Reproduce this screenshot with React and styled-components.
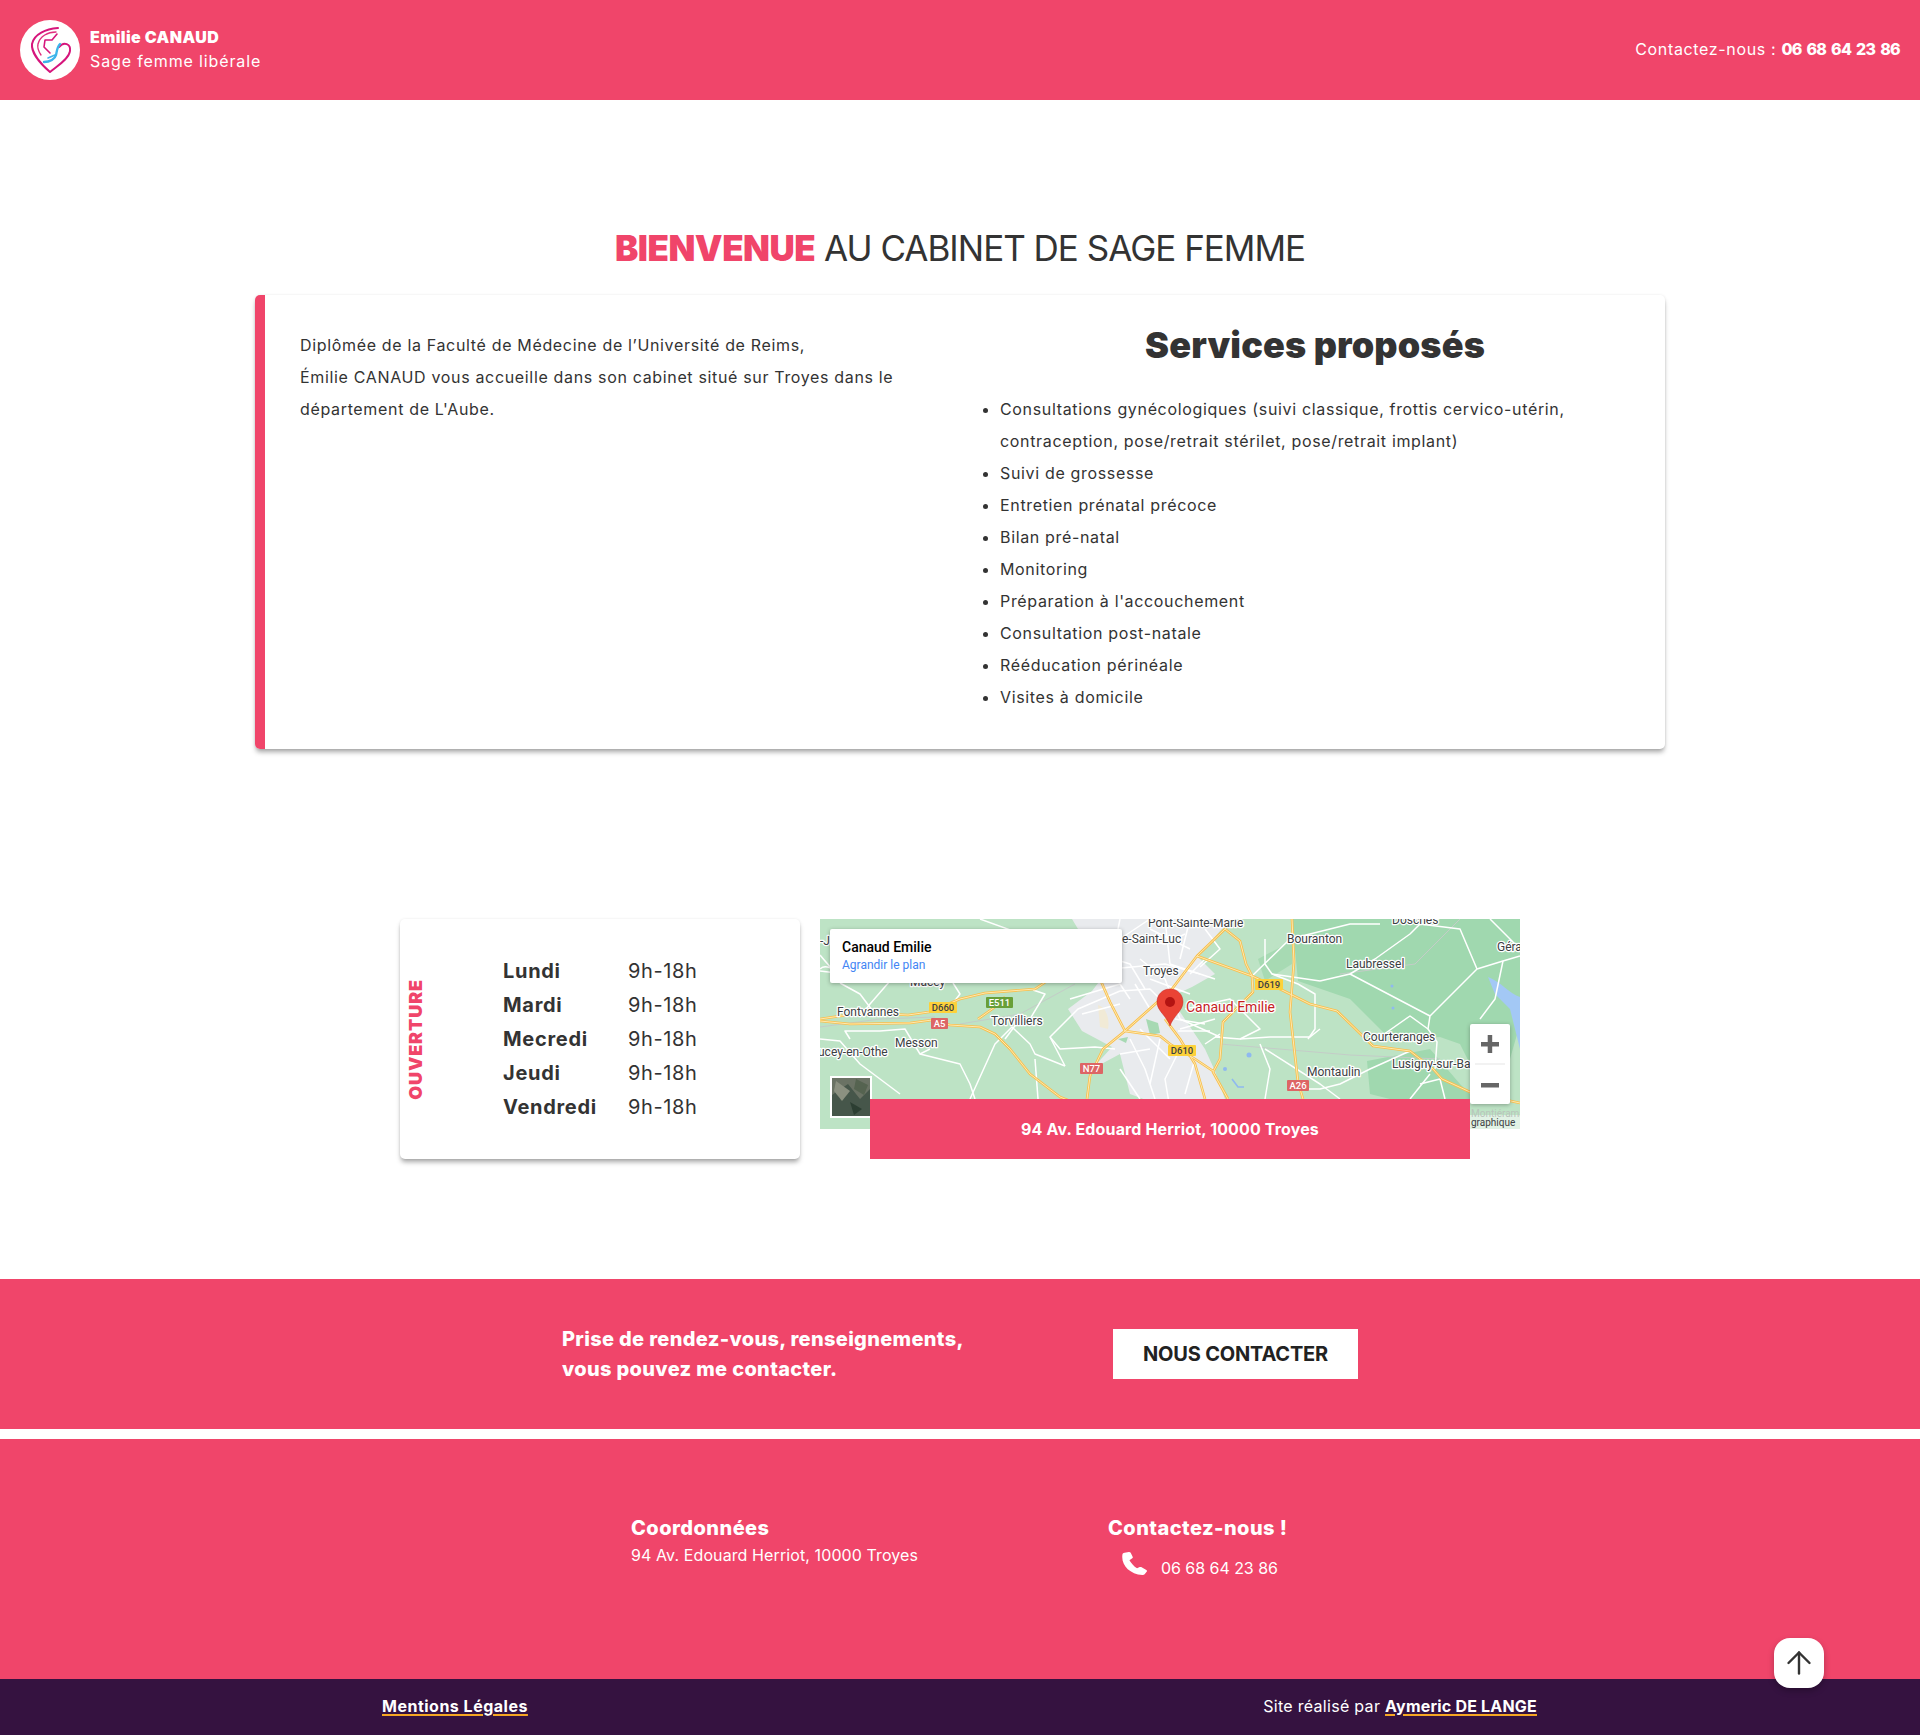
import React from 'react'
import styled, { createGlobalStyle } from 'styled-components'
import { ArrowUp } from 'lucide-react'

const pink = '#f0456a'
const dark = '#333333'
const sans = '"Inter", "Liberation Sans", sans-serif'
const cardShadow = '0 4px 5px -1px rgba(0, 0, 0, 0.35), 0 0 3px rgba(0, 0, 0, 0.08)'

const Global = createGlobalStyle`
  html, body { margin: 0; padding: 0; background: #fff; }
  body { font-family: ${sans}; color: ${dark}; width: 1920px; height: 1735px; overflow: hidden; }
  * { box-sizing: border-box; }
`

const Header = styled.header`
  height: 100px;
  background: ${pink};
  color: #fff;
  display: flex;
  align-items: center;
  justify-content: space-between;
  padding: 0 20px;
  font-size: 16px;
`
const Brand = styled.div`
  display: flex;
  align-items: center;
  gap: 10px;
`
const LogoDisc = styled.div`
  width: 60px;
  height: 60px;
  border-radius: 50%;
  background: #fff;
`
const BrandText = styled.div`
  line-height: 24px;
  padding-bottom: 3px;
  strong { display: block; font-weight: 900; letter-spacing: 0.4px; }
  span { letter-spacing: 0.87px; }
`
const HeadContact = styled.div`
  letter-spacing: 0.65px;
  padding-bottom: 2px;
  strong { font-weight: 800; letter-spacing: -0.7px; word-spacing: 2px; }
`

const Welcome = styled.section`
  padding-top: 126px;
`
const Title = styled.h1`
  margin: 0 0 20px;
  height: 49px;
  line-height: 44px;
  text-align: center;
  font-size: 35px;
  font-weight: 400;
  letter-spacing: -1px;
  b { color: ${pink}; font-weight: 900; letter-spacing: -0.5px; }
`
const Card = styled.div`
  width: 1410px;
  margin: 0 auto;
  display: flex;
  border-left: 10px solid ${pink};
  border-radius: 5px;
  box-shadow: ${cardShadow};
  padding: 34px 0 36px;
  font-size: 16px;
  line-height: 32px;
  letter-spacing: 0.66px;
`
const Intro = styled.p`
  margin: 0;
  width: 695px;
  padding: 0 60px 0 35px;
`
const Services = styled.div`
  width: 705px;
`
const ServicesTitle = styled.h2`
  margin: 0 0 32px;
  padding-left: 5px;
  font-size: 36px;
  line-height: 32px;
  font-weight: 900;
  text-align: center;
  letter-spacing: 0.15px;
`
const ServiceList = styled.ul`
  margin: 0;
  padding: 0 80px 0 40px;
`

const Infos = styled.section`
  margin-top: 170px;
  display: flex;
  justify-content: center;
  align-items: flex-start;
  gap: 20px;
`
const HoursCard = styled.div`
  width: 400px;
  height: 240px;
  display: flex;
  align-items: center;
  border-radius: 5px;
  box-shadow: ${cardShadow};
  padding-left: 7px;
`
const HoursLabel = styled.div`
  writing-mode: vertical-rl;
  transform: rotate(180deg);
  color: ${pink};
  font-size: 18px;
  font-weight: 900;
  letter-spacing: 0.9px;
  width: 18px;
  line-height: 18px;
  margin-right: 78px;
`
const Hours = styled.div`
  display: grid;
  grid-template-columns: 125px auto;
  grid-auto-rows: 34px;
  align-items: center;
  font-size: 20px;
  b { font-weight: 700; letter-spacing: 0.7px; }
  span { letter-spacing: 0.6px; }
`
const MapBlock = styled.div`
  position: relative;
  width: 700px;
  height: 240px;
`
const MapFrame = styled.div`
  position: relative;
  width: 700px;
  height: 210px;
  overflow: hidden;
  font-family: Roboto, sans-serif;
  svg { display: block; }
`
const MapInfo = styled.div`
  position: absolute;
  left: 10px;
  top: 10px;
  width: 292px;
  height: 54px;
  padding: 9px 12px;
  background: #fff;
  border-radius: 2px;
  box-shadow: 0 1px 4px rgba(0, 0, 0, 0.3);
  strong { display: block; font-size: 14px; font-weight: 500; color: #000; line-height: 18px; }
  a { display: block; font-size: 12px; color: #4285f4; line-height: 19px; }
`
const ZoomBox = styled.div`
  position: absolute;
  left: 650px;
  top: 105px;
  width: 40px;
  height: 80px;
  background: #fff;
  border-radius: 2px;
  box-shadow: 0 1px 4px rgba(0, 0, 0, 0.3);
`
const AddressBar = styled.div`
  position: absolute;
  left: 50px;
  bottom: 0;
  width: 600px;
  height: 60px;
  background: ${pink};
  color: #fff;
  display: flex;
  align-items: center;
  justify-content: center;
  font-size: 16px;
  font-weight: 700;
  letter-spacing: 0.14px;
  padding-bottom: 1px;
`

const Cta = styled.section`
  margin-top: 120px;
  height: 150px;
  background: ${pink};
  display: flex;
  align-items: center;
  justify-content: center;
`
const CtaText = styled.div`
  width: 551px;
  color: #fff;
  font-size: 20px;
  line-height: 30px;
  font-weight: 800;
  letter-spacing: 0.33px;
`
const CtaButton = styled.a`
  width: 245px;
  height: 50px;
  background: #fff;
  color: #222;
  display: flex;
  align-items: center;
  justify-content: center;
  font-size: 20px;
  font-weight: 700;
  letter-spacing: -0.2px;
`

const Footer = styled.footer`
  margin-top: 10px;
  height: 240px;
  background: ${pink};
  color: #fff;
  display: flex;
  justify-content: center;
  padding-top: 74px;
`
const FooterCol = styled.div`
  width: ${(p) => p.$width}px;
`
const FooterTitle = styled.h3`
  margin: 0;
  font-size: 20px;
  line-height: 30px;
  font-weight: 800;
  letter-spacing: 0.45px;
  white-space: nowrap;
`
const FooterText = styled.div`
  margin-top: -1px;
  font-size: 16px;
  line-height: 26px;
  letter-spacing: 0.1px;
`
const PhoneRow = styled.div`
  display: flex;
  align-items: center;
  gap: 14px;
  padding: 12px 0 0 14px;
  font-size: 16px;
  line-height: 26px;
  letter-spacing: -0.05px;
  white-space: nowrap;
  svg { margin-top: -8px; }
`
const BottomBar = styled.div`
  height: 56px;
  background: #351240;
  color: #fff;
  display: flex;
  justify-content: space-between;
  align-items: center;
  padding: 0 383px 2px 382px;
  font-size: 16px;
  letter-spacing: 0.3px;
`
const BottomLink = styled.a`
  font-weight: 700;
  color: #fff;
  letter-spacing: ${(p) => p.$spacing}px;
  text-decoration: underline;
  text-decoration-color: #f5a623;
  text-decoration-thickness: 2px;
  text-underline-offset: 2px;
`
const TopButton = styled.button`
  position: fixed;
  left: 1774px;
  top: 1638px;
  width: 50px;
  height: 50px;
  border: 0;
  padding: 0;
  border-radius: 16px;
  background: #fff;
  color: ${dark};
  display: flex;
  align-items: center;
  justify-content: center;
  box-shadow: 0 3px 6px rgba(0, 0, 0, 0.25);
`

const services = [
  'Consultations gynécologiques (suivi classique, frottis cervico-utérin, contraception, pose/retrait stérilet, pose/retrait implant)',
  'Suivi de grossesse',
  'Entretien prénatal précoce',
  'Bilan pré-natal',
  'Monitoring',
  "Préparation à l'accouchement",
  'Consultation post-natale',
  'Rééducation périnéale',
  'Visites à domicile',
]

const days = ['Lundi', 'Mardi', 'Mecredi', 'Jeudi', 'Vendredi']

const Logo = () => (
  <LogoDisc>
    <svg width="60" height="60" viewBox="0 0 60 60" fill="none" strokeLinecap="round" strokeLinejoin="round">
      <path d="M38 8C26 9 14 14 12 24C11 33 22 45 30 52C37 46 49 39 50 31C51 24 44 21 39 27" stroke="#d6157c" strokeWidth="2" />
      <path d="M36 12C28 12 20 16 18 24C17 28 19 32 21 35" stroke="#e0307f" strokeWidth="1.4" />
      <path d="M37 14L32 20L25 20L24 27L30 33" stroke="#d6157c" strokeWidth="1.6" />
      <path d="M24 42C30 42 35 39 36 35C37 31 37 27 40 24" stroke="#3db4ea" strokeWidth="2.4" />
      <path d="M28 38L35 35" stroke="#3db4ea" strokeWidth="1.6" />
    </svg>
  </LogoDisc>
)

const Label = ({ x, y, children, size = 12, fill = '#3c4043' }) => (
  <text x={x} y={y} fontSize={size} fill={fill} stroke="#fff" strokeWidth="2.5" paintOrder="stroke" strokeLinejoin="round">
    {children}
  </text>
)

const Shield = ({ x, y, w, h = 11, bg, color = '#fff', children }) => (
  <g>
    <rect x={x} y={y} width={w} height={h} rx="1" fill={bg} />
    <text x={x + w / 2} y={y + h - 2.4} fontSize="9.5" fontWeight="500" textAnchor="middle" fill={color}>
      {children}
    </text>
  </g>
)

const motorways = [
  'M0 102L30 105L90 104L112 101L130 106L160 108L175 115L190 130L210 155L240 178L250 182',
  'M0 100L20 97L50 94L88 96L109 93L140 80L165 74L215 70L230 60L240 50',
  'M158 100L175 88L185 78',
  'M267 180L270 157L283 130L305 112L333 87L352 70L377 37L405 10L412 0',
  'M377 37L432 57L460 70L490 85L517 92L553 127L590 132L613 150L622 160L650 173L700 184',
  'M405 10L420 22L426 45L432 57L433 73L403 103L400 140L393 153L408 180',
  'M305 112L340 117L350 125L375 140L393 152',
  'M345 100L360 120L375 145L385 180',
  'M472 0L474 43L470 93L478 163L483 180',
  'M280 60L290 83L305 112',
]

const roads = [
  'M0 50C8 42 20 60 0 36',
  'M20 64L40 75L55 95',
  'M70 62L50 85L40 98',
  'M0 52L25 55L60 30L120 48L140 30',
  'M160 0L215 20L250 12',
  'M133 64L140 75L130 88',
  'M0 120L20 122L40 145L80 175',
  'M30 120L25 112L60 112L85 110L100 135L140 145L150 165L155 180',
  'M100 135L110 130',
  'M150 180L175 125L192 108L210 125L215 135L245 147',
  'M200 100L185 120',
  'M215 140L218 180',
  'M230 118L240 130L275 128L295 130',
  'M245 147L230 118L258 90L300 72',
  'M213 71L225 75L210 100',
  'M300 150L320 180',
  'M310 120L325 150L335 180',
  'M300 72L330 70L345 85',
  'M252 55L290 50L345 45L380 55',
  'M320 40L345 60L360 100L400 118',
  'M365 90L410 80L440 110L420 120L395 118',
  'M420 120L450 118L490 118L500 110',
  'M432 57L470 20L530 5L560 5',
  'M445 20L445 45L452 55L500 62',
  'M500 62L530 55L610 97',
  'M452 55L478 65L495 75L495 110L488 120',
  'M555 40L530 55',
  'M555 40L590 15L600 5L640 10L657 50',
  'M657 50L683 42L700 37',
  'M657 50L610 97L608 110L617 123L615 150',
  'M608 110L590 97L560 118',
  'M590 132L550 150L520 165L500 170L480 170',
  'M670 0L690 20L700 30',
  'M683 42L675 80L660 100',
  'M440 125L450 150L445 180',
  'M445 130L500 165L520 180',
  'M600 165L620 160L625 180',
  'M590 180L610 155',
  // rues de Troyes
  'M255 40L300 20L330 0',
  'M262 30L310 45L325 70',
  'M300 0L290 50',
  'M330 10L370 30',
  'M345 0L350 45',
  'M370 0L360 40',
  'M250 80L300 65L310 80',
  'M262 95L300 85',
  'M315 65L330 90',
  'M350 45L395 60',
  'M320 110L350 140',
  'M340 120L330 165',
  'M360 130L345 160L350 190',
  'M375 140L365 175',
  'M385 125L400 115',
  'M300 135L330 130',
  'M370 55L385 40',
  'M330 60L370 75',
  'M360 110L395 100',
  'M355 100L385 105',
  'M358 112L390 112',
  'M385 10L400 30L380 48',
  'M318 20L345 25L365 15',
]

const MapDrawing = () => (
  <svg width="700" height="210" viewBox="0 0 700 210" style={{ fontFamily: 'Roboto, sans-serif' }}>
    <rect width="700" height="210" fill="#bde3c5" />
    <path d="M472 0L700 0L700 105L680 175L660 165L640 125L620 118L570 120L530 80L478 62Z" fill="#a0d8af" />
    <path d="M547 142L610 130L640 165L655 180L620 205L590 185L550 175Z" fill="#a0d8af" />
    <path d="M438 40L472 22L472 45L445 62Z" fill="#a7dab3" />
    <path d="M252 0L412 0L400 12L378 38L395 55L372 68L350 78L385 130L395 152L405 180L350 190L310 175L300 135L272 150L292 128L262 112L248 90L272 72L285 55Z" fill="#e9ebee" />
    <path d="M278 86C286 88 290 100 288 110L280 108Z" fill="#f1ead6" />
    <path d="M326 100L338 104L340 114L330 116Z" fill="#a7d9b3" />
    <path d="M298 120L308 118L306 124Z" fill="#a7d9b3" />
    <path d="M668 58C680 62 690 75 700 78L700 130L690 90L675 75Z" fill="#a3c8f5" />
    <path d="M655 120C665 115 675 125 680 135L660 135Z" fill="#a3c8f5" />
    <circle cx="429" cy="136" r="2.5" fill="#8fb9f0" />
    <circle cx="405" cy="150" r="2" fill="#8fb9f0" />
    <path d="M412 160L418 168L424 168" stroke="#8fb9f0" strokeWidth="1.6" fill="none" />
    <circle cx="572" cy="67" r="1.5" fill="#8fb9f0" />
    <circle cx="573" cy="89" r="1.5" fill="#8fb9f0" />
    <path d="M0 108L60 100L115 98M140 105L200 95L255 65M400 125L530 136L620 140M520 55L595 45L640 0" stroke="#c4ccc8" strokeWidth="1" fill="none" />
    <g stroke="#fff" strokeWidth="1.5" fill="none" strokeLinejoin="round">
      {roads.map((d) => <path key={d} d={d} />)}
    </g>
    <g fill="none" strokeLinejoin="round">
      {motorways.map((d) => <path key={d} d={d} stroke="#f9bf4c" strokeWidth="2.6" />)}
      {motorways.map((d) => <path key={`${d}i`} d={d} stroke="#fee9b0" strokeWidth="1" />)}
    </g>
    <Label x={0} y={26}>-J</Label>
    <Label x={328} y={8}>Pont-Sainte-Marie</Label>
    <Label x={302} y={24}>e-Saint-Luc</Label>
    <Label x={323} y={56}>Troyes</Label>
    <Label x={90} y={67}>Macey</Label>
    <Label x={17} y={97}>Fontvannes</Label>
    <Label x={171} y={106}>Torvilliers</Label>
    <Label x={75} y={128}>Messon</Label>
    <Label x={-2} y={137}>ucey-en-Othe</Label>
    <Label x={467} y={24}>Bouranton</Label>
    <Label x={572} y={5}>Doschés</Label>
    <Label x={526} y={49}>Laubressel</Label>
    <Label x={677} y={32}>Géra</Label>
    <Label x={543} y={122}>Courteranges</Label>
    <Label x={572} y={149}>Lusigny-sur-Ba</Label>
    <Label x={487} y={157}>Montaulin</Label>
    <Label x={366} y={93} size={14} fill="#c5221f">Canaud Emilie</Label>
    <Shield x={109} y={83} w={28} bg="#fdd13a" color="#3c4043">D660</Shield>
    <Shield x={166} y={78} w={27} bg="#689f38">E511</Shield>
    <Shield x={111} y={99} w={17} bg="#dd6565">A5</Shield>
    <Shield x={260} y={144} w={23} bg="#dd6565">N77</Shield>
    <Shield x={435} y={60} w={28} bg="#fdd13a" color="#3c4043">D619</Shield>
    <Shield x={348} y={126} w={28} bg="#fdd13a" color="#3c4043">D610</Shield>
    <Shield x={467} y={161} w={22} bg="#dd6565">A26</Shield>
    <path d="M350 70C342 70 337 76 337 83C337 92 347 97 350 107C353 97 363 92 363 83C363 76 358 70 350 70Z" fill="#ea4335" stroke="#c5221f" strokeWidth="0.5" />
    <circle cx="350" cy="83" r="5" fill="#b31412" />
    <rect x="10" y="157" width="42" height="42" fill="#fff" />
    <rect x="12" y="159" width="38" height="38" fill="#6a7264" />
    <path d="M12 176L28 165L40 180L50 170L50 197L12 197Z" fill="#46564a" />
    <path d="M16 162L30 172L22 182L14 172Z" fill="#8b9080" />
    <path d="M30 183L42 190L34 196Z" fill="#2c3e32" />
    <path d="M36 160L48 166L44 176L34 170Z" fill="#556350" />
    <rect x="650" y="196" width="50" height="14" fill="#fff" opacity="0.55" />
    <text x="651" y="207" fontSize="10" fill="#3c4043">graphique</text>
    <text x="651" y="198" fontSize="10" fill="#b9c4bb">Montiérama</text>
  </svg>
)

const ZoomIcons = () => (
  <svg width="40" height="80" viewBox="0 0 40 80" fill="#666">
    <rect x="11" y="18" width="18" height="4.5" />
    <rect x="17.7" y="11" width="4.5" height="18" />
    <rect x="5" y="39.5" width="30" height="1" fill="#e6e6e6" />
    <rect x="11" y="59" width="18" height="4.5" />
  </svg>
)

const PhoneIcon = () => (
  <svg width="25" height="24" viewBox="5 1.5 15.8 20.9" preserveAspectRatio="none" fill="#fff">
    <path d="M6.6 2.2 9.3 1.6c.5-.1 1 .2 1.2.6l1.3 3.6c.2.4 0 .9-.3 1.200L9.700 8.600c.9 2.300 2.900 5.300 4.800 7.100l1.700-1.100c.4-.2.9-.200 1.200.1l3 2.500c.4.300.5.800.3 1.200l-1.400 2.500c-.3.500-.8.800-1.400.7C9.500 20.500 4.200 12.500 5.300 3.400c.1-.6.600-1.100 1.300-1.200Z" />
  </svg>
)

const App = () => (
  <>
    <Global />
    <Header>
      <Brand>
        <Logo />
        <BrandText>
          <strong>Emilie CANAUD</strong>
          <span>Sage femme libérale</span>
        </BrandText>
      </Brand>
      <HeadContact>
        Contactez-nous : <strong>06 68 64 23 86</strong>
      </HeadContact>
    </Header>

    <Welcome>
      <Title>
        <b>BIENVENUE</b> AU CABINET DE SAGE FEMME
      </Title>
      <Card>
        <Intro>
          Diplômée de la Faculté de Médecine de l’Université de Reims,
          <br />
          Émilie CANAUD vous accueille dans son cabinet situé sur Troyes dans le département de L'Aube.
        </Intro>
        <Services>
          <ServicesTitle>Services proposés</ServicesTitle>
          <ServiceList>
            {services.map((s) => <li key={s}>{s}</li>)}
          </ServiceList>
        </Services>
      </Card>
    </Welcome>

    <Infos>
      <HoursCard>
        <HoursLabel>OUVERTURE</HoursLabel>
        <Hours>
          {days.map((d) => (
            <React.Fragment key={d}>
              <b>{d}</b>
              <span>9h-18h</span>
            </React.Fragment>
          ))}
        </Hours>
      </HoursCard>
      <MapBlock>
        <MapFrame>
          <MapDrawing />
          <MapInfo>
            <strong>Canaud Emilie</strong>
            <a>Agrandir le plan</a>
          </MapInfo>
          <ZoomBox>
            <ZoomIcons />
          </ZoomBox>
        </MapFrame>
        <AddressBar>94 Av. Edouard Herriot, 10000 Troyes</AddressBar>
      </MapBlock>
    </Infos>

    <Cta>
      <CtaText>
        Prise de rendez-vous, renseignements,
        <br />
        vous pouvez me contacter.
      </CtaText>
      <CtaButton>NOUS CONTACTER</CtaButton>
    </Cta>

    <Footer>
      <FooterCol $width={477}>
        <FooterTitle>Coordonnées</FooterTitle>
        <FooterText>94 Av. Edouard Herriot, 10000 Troyes</FooterText>
      </FooterCol>
      <FooterCol $width={181}>
        <FooterTitle>Contactez-nous !</FooterTitle>
        <PhoneRow>
          <PhoneIcon />
          06 68 64 23 86
        </PhoneRow>
      </FooterCol>
    </Footer>
    <BottomBar>
      <BottomLink $spacing={0.5}>Mentions Légales</BottomLink>
      <div>
        Site réalisé par <BottomLink $spacing={0.2}>Aymeric DE LANGE</BottomLink>
      </div>
    </BottomBar>
    <TopButton aria-label="Haut de page">
      <ArrowUp size={36} strokeWidth={1.6} />
    </TopButton>
  </>
)

export default App
